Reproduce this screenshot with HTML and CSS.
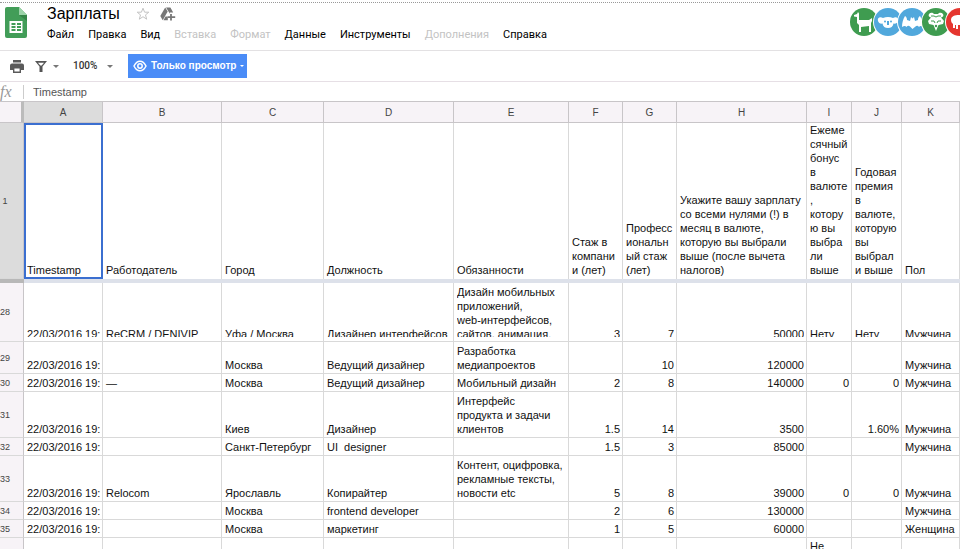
FILE: index.html
```
<!DOCTYPE html>
<html lang="ru">
<head>
  <meta charset="UTF-8">
  <title>Зарплаты</title>
  <meta name="viewport" content="width=device-width, initial-scale=1">
  <link rel="stylesheet" href="styles.css">
</head>
<body>

<header class="header">
  <a class="logo" href="#" aria-label="Зарплаты">
    <svg width="22" height="31" viewBox="0 0 22 31">
      <path d="M2 0h12l8 8v21a2 2 0 0 1-2 2H2a2 2 0 0 1-2-2V2a2 2 0 0 1 2-2z" fill="#429d58"/>
      <path d="M14 8h8v6z" fill="#348446"/>
      <path d="M14 0l8 8h-8z" fill="#9bd3a8"/>
      <path d="M4.500 14h13v12h-13z" fill="#fff"/>
      <path d="M6.500 16h4v2h-4zM12 16h4v2h-4zM6.500 19h4v2h-4zM12 19h4v2h-4zM6.500 22h4v2h-4zM12 22h4v2h-4z" fill="#429d58"/>
    </svg>
  </a>
  <div class="header-main">
    <div class="title-row">
      <h1>Зарплаты</h1>
      <button class="icon-button" aria-label="Пометить">
        <svg width="14" height="14" viewBox="0 0 14 14">
          <path d="M7 1.200l1.600 4h4.200L9.500 7.900l1.200 4.300L7 9.700l-3.700 2.500 1.200-4.300L1.200 5.200h4.200z" fill="none" stroke="#c4c4c4"/>
        </svg>
      </button>
      <button class="icon-button" aria-label="Добавить на диск">
        <svg width="16" height="14" viewBox="0 0 16 14">
          <path d="M5.200 0.500L0.300 9l2.400 4.200 5-8.600z" fill="#777"/>
          <path d="M6 0.500h4.400l2.800 5h-3.300v1.300z" fill="#777"/>
          <path d="M5.500 9.500h2.300v3.700H3.500z" fill="#777"/>
          <path d="M11 7v6.500M7.800 10.200h7.400" stroke="#777" stroke-width="1.800"/>
        </svg>
      </button>
    </div>
    <nav class="menu">
      <button>Файл</button>
      <button>Правка</button>
      <button>Вид</button>
      <button disabled>Вставка</button>
      <button disabled>Формат</button>
      <button>Данные</button>
      <button>Инструменты</button>
      <button disabled>Дополнения</button>
      <button>Справка</button>
    </nav>
  </div>
  <div class="avatars">
    <svg class="avatar green" viewBox="0 0 28 28">
      <path d="M4 7l3-1 1-2 1 1.500V12h10l3-2v3l-1 2v9h-2v-6l-8 1v5H9v-7L7 15V9L4 8.500z" fill="#fff"/>
    </svg>
    <svg class="avatar blue" viewBox="0 0 28 28">
      <path d="M4 13c-1-3 2-5 5-3 3-1.500 7-1.500 10 0 3-2 6 0 5 3-.5 2-2.500 3-4.500 2.500C19 18.500 17 20 14 20s-5-1.500-5.500-4.500C6.500 16 4.500 15 4 13z" fill="#fff"/>
      <circle cx="11" cy="13.500" r="1" fill="#51a8dc"/>
      <circle cx="17" cy="13.500" r="1" fill="#51a8dc"/>
      <path d="M13 13h2v4h-2z" fill="#51a8dc"/>
    </svg>
    <svg class="avatar blue" viewBox="0 0 28 28">
      <path d="M7 8c1.500 1 2 2 2 4l3 1 1-4 1.500 1.500L16 9l1 4 3-1c0-2 .5-3 2-4 2 3 3 7 3 11-2-1.500-3-1.500-4 0-1-1.500-2.500-1.500-3.500-.5L14.500 21 12 18.500c-1-1-2.500-1-3.500.5-1-1.500-2.500-1.500-4.500 0 0-4 1-8 3-11z" fill="#fff"/>
    </svg>
    <svg class="avatar green" viewBox="0 0 28 28">
      <path d="M7 6c2-2 4-1 5 0h4c1-1 3-2 5 0 1 2 0 3-2 3.500L22 13l-1 3-4.500 1-2.500 6-2.500-6L7 16l-1-3 3-3.500C7 9 6 8 7 6z" fill="#fff"/>
      <path d="M9 8h3l2 1 2-1h3M9 13l3 0 1 2M19 13l-3 0-1 2" fill="none" stroke="#3f9c50" stroke-width="1"/>
      <circle cx="14" cy="18" r="1.200" fill="#3f9c50"/>
    </svg>
    <svg class="avatar red" viewBox="0 0 28 28">
      <path d="M5 12c0-4 4-5 8-5 6 0 9 3 9 7v6h-3v-3h-7v4h-2v-4H9v3H7v-4c-1-1-2-2-2-4z" fill="#fff"/>
    </svg>
  </div>
</header>

<div class="toolbar">
  <button class="icon-button" aria-label="Печать">
    <svg width="14" height="13" viewBox="0 0 14 13">
      <path d="M3 0h8v2.500H3zM2 3.500h10a2 2 0 0 1 2 2V10h-3V8H3v2H0V5.500a2 2 0 0 1 2-2z" fill="#5a5a5a"/>
      <path d="M3.700 7.700h6.600v4.600H3.700z" fill="#fff" stroke="#5a5a5a" stroke-width="1.400"/>
    </svg>
  </button>
  <button class="icon-button filter" aria-label="Фильтр">
    <svg width="12" height="11" viewBox="0 0 12 11">
      <path d="M0 0h12L7.500 5.500V11h-3V5.500z" fill="#555"/>
      <path d="M3 1.700h6L6.700 4.500H5.300z" fill="#fff"/>
    </svg>
    <span class="caret"></span>
  </button>
  <label class="zoom">
    <select aria-label="Масштаб">
      <option>100%</option>
    </select>
    <span class="caret"></span>
  </label>
  <button class="view-only">
    <svg width="14" height="12" viewBox="0 0 14 12">
      <path d="M1 6c1.500-3 3.500-4.800 6-4.800S11.500 3 13 6c-1.500 3-3.500 4.800-6 4.800S2.500 9 1 6z" fill="none" stroke="#fff" stroke-width="1.500"/>
      <circle cx="7" cy="6" r="2.200" fill="none" stroke="#fff" stroke-width="1.500"/>
    </svg>
    Только просмотр
    <span class="caret light"></span>
  </button>
</div>

<div class="formula-bar">
  <label class="fx" for="formula">fx</label>
  <input id="formula" type="text" value="Timestamp">
</div>

<main class="grid">
  <table>
    <colgroup>
      <col class="col-num"><col class="col-a"><col class="col-b"><col class="col-c">
      <col class="col-d"><col class="col-e"><col class="col-f"><col class="col-g">
      <col class="col-h"><col class="col-i"><col class="col-j"><col class="col-k">
    </colgroup>
    <thead>
      <tr class="letters">
        <td class="corner"></td>
        <th class="active">A</th><th>B</th><th>C</th><th>D</th><th>E</th><th>F</th>
        <th>G</th><th>H</th><th>I</th><th>J</th><th>K</th>
      </tr>
      <tr class="row-titles">
        <th class="active">1</th>
        <td class="selected">Timestamp</td>
        <td>Работодатель</td>
        <td>Город</td>
        <td>Должность</td>
        <td>Обязанности</td>
        <td>Стаж в<br>компани<br>и (лет)</td>
        <td>Професс<br>иональн<br>ый стаж<br>(лет)</td>
        <td>Укажите вашу зарплату<br>со всеми нулями (!) в<br>месяц в валюте,<br>которую вы выбрали<br>выше (после вычета<br>налогов)</td>
        <td>Ежеме<br>сячный<br>бонус<br>в<br>валюте<br>,<br>котору<br>ю вы<br>выбра<br>ли<br>выше</td>
        <td>Годовая<br>премия<br>в<br>валюте,<br>которую<br>вы<br>выбрал<br>и выше</td>
        <td>Пол</td>
      </tr>
      <tr class="freeze">
        <td></td>
        <td colspan="11"></td>
      </tr>
    </thead>
    <tbody>
      <tr class="row-cut">
        <th>28</th>
        <td><div><span>22/03/2016 19:</span></div></td>
        <td><div><span>ReCRM / DENIVIP</span></div></td>
        <td><div><span>Уфа / Москва</span></div></td>
        <td><div><span>Дизайнер интерфейсов</span></div></td>
        <td><div><span>Дизайн мобильных<br>приложений,<br>web-интерфейсов,<br>сайтов, анимация.</span></div></td>
        <td class="num"><div><span>3</span></div></td>
        <td class="num"><div><span>7</span></div></td>
        <td class="num"><div><span>50000</span></div></td>
        <td><div><span>Нету</span></div></td>
        <td><div><span>Нету</span></div></td>
        <td><div><span>Мужчина</span></div></td>
      </tr>
      <tr class="lines-2">
        <th>29</th>
        <td>22/03/2016 19:</td>
        <td></td>
        <td>Москва</td>
        <td>Ведущий дизайнер</td>
        <td>Разработка<br>медиапроектов</td>
        <td></td>
        <td class="num">10</td>
        <td class="num">120000</td>
        <td></td>
        <td></td>
        <td>Мужчина</td>
      </tr>
      <tr>
        <th>30</th>
        <td>22/03/2016 19:</td>
        <td>—</td>
        <td>Москва</td>
        <td>Ведущий дизайнер</td>
        <td>Мобильный дизайн</td>
        <td class="num">2</td>
        <td class="num">8</td>
        <td class="num">140000</td>
        <td class="num">0</td>
        <td class="num">0</td>
        <td>Мужчина</td>
      </tr>
      <tr class="lines-3">
        <th>31</th>
        <td>22/03/2016 19:</td>
        <td></td>
        <td>Киев</td>
        <td>Дизайнер</td>
        <td>Интерфейс<br>продукта и задачи<br>клиентов</td>
        <td class="num">1.5</td>
        <td class="num">14</td>
        <td class="num">3500</td>
        <td></td>
        <td class="num">1.60%</td>
        <td>Мужчина</td>
      </tr>
      <tr>
        <th>32</th>
        <td>22/03/2016 19:</td>
        <td></td>
        <td>Санкт-Петербург</td>
        <td>UI&nbsp; designer</td>
        <td></td>
        <td class="num">1.5</td>
        <td class="num">3</td>
        <td class="num">85000</td>
        <td></td>
        <td></td>
        <td>Мужчина</td>
      </tr>
      <tr class="lines-3">
        <th>33</th>
        <td>22/03/2016 19:</td>
        <td>Relocom</td>
        <td>Ярославль</td>
        <td>Копирайтер</td>
        <td>Контент, оцифровка,<br>рекламные тексты,<br>новости etc</td>
        <td class="num">5</td>
        <td class="num">8</td>
        <td class="num">39000</td>
        <td class="num">0</td>
        <td class="num">0</td>
        <td>Мужчина</td>
      </tr>
      <tr>
        <th>34</th>
        <td>22/03/2016 19:</td>
        <td></td>
        <td>Москва</td>
        <td>frontend developer</td>
        <td></td>
        <td class="num">2</td>
        <td class="num">6</td>
        <td class="num">130000</td>
        <td></td>
        <td></td>
        <td>Мужчина</td>
      </tr>
      <tr>
        <th>35</th>
        <td>22/03/2016 19:</td>
        <td></td>
        <td>Москва</td>
        <td>маркетинг</td>
        <td></td>
        <td class="num">1</td>
        <td class="num">5</td>
        <td class="num">60000</td>
        <td></td>
        <td></td>
        <td>Женщина</td>
      </tr>
      <tr class="row-last">
        <th></th>
        <td></td><td></td><td></td><td></td><td></td><td></td><td></td><td></td>
        <td>Не</td>
        <td></td><td></td>
      </tr>
    </tbody>
  </table>
</main>

</body>
</html>
```
FILE: styles.css
```
* {
  box-sizing: border-box;
}
body {
  margin: 0;
  padding-top: 2px;
  height: 100vh;
  overflow: hidden;
  display: flex;
  flex-direction: column;
  background: #fff;
  color: #111;
  font-family: "Liberation Sans", Arial, sans-serif;
  font-size: 11px;
  line-height: 14px;
}
button, input, select {
  margin: 0;
  padding: 0;
  border: 0;
  background: none;
  color: inherit;
  font: inherit;
}
svg {
  display: block;
}
.header {
  display: flex;
  flex: none;
  height: 49px;
  overflow: hidden;
  border-top: 1px dotted #999;
  border-bottom: 1px solid #e3e1e3;
}
.logo {
  padding: 4px 20px 0 5px;
}
.header-main {
  flex: 1;
}
.title-row {
  display: flex;
  align-items: center;
  gap: 10px;
  height: 22px;
}
h1 {
  margin: 0 6px 0 0;
  font-size: 16px;
  line-height: 22px;
  font-weight: normal;
  color: #000;
}
.menu {
  display: flex;
  gap: 14px;
  font-family: Roboto, Arial, sans-serif;
  font-size: 11px;
  line-height: 20px;
  color: #000;
}
.menu button:disabled {
  color: #c3c3c3;
}
.avatars {
  display: flex;
  padding-top: 5px;
  margin-right: -14px;
}
.avatar {
  width: 28px;
  height: 28px;
  margin-left: -4px;
  border-radius: 50%;
  box-shadow: 0 0 0 1px #fff;
}
.green {
  background: #3f9c50;
}
.blue {
  background: #51a8dc;
}
.red {
  background: #e5362f;
}
.toolbar {
  display: flex;
  flex: none;
  align-items: center;
  height: 31px;
  padding-left: 10px;
  border-bottom: 1px solid #e6dfe5;
}
.filter {
  display: flex;
  align-items: center;
  gap: 6px;
  margin-left: 11px;
}
.caret {
  border: 3px solid transparent;
  border-top-color: #777;
  border-bottom: 0;
}
.caret.light {
  border-width: 2px 2px 0;
  border-top-color: #fff;
}
.zoom {
  display: flex;
  align-items: center;
  gap: 9px;
  margin: 0 15px 0 14px;
  color: #333;
}
.zoom select {
  appearance: none;
  width: 25px;
  font-family: Roboto, Arial, sans-serif;
  font-size: 10px;
  font-weight: 500;
}
.view-only {
  display: flex;
  align-items: center;
  gap: 4px;
  height: 24px;
  padding: 0 3px 0 5px;
  background: #4a8cf7;
  color: #fff;
  font-size: 10px;
  font-weight: bold;
}
.formula-bar {
  display: flex;
  flex: none;
  align-items: center;
  height: 19px;
}
.fx {
  width: 24px;
  border-right: 1px solid #ccc;
  color: #999;
  font-family: "Liberation Serif", serif;
  font-size: 16px;
  font-style: italic;
}
.formula-bar input {
  flex: 1;
  padding-left: 9px;
  color: #555;
  font-size: 11px;
}
.grid {
  flex: 1;
  overflow: hidden;
}
table {
  width: 100%;
  table-layout: fixed;
  border-spacing: 0;
}
.col-num { width: 24px; }
.col-a { width: 79px; }
.col-b { width: 119px; }
.col-c { width: 102px; }
.col-d { width: 130px; }
.col-e { width: 115px; }
.col-f { width: 54px; }
.col-g { width: 54px; }
.col-h { width: 130px; }
.col-i { width: 45px; }
.col-j { width: 50px; }
td {
  height: 18px;
  padding: 1px 2px 1px 3px;
  border-right: 1px solid #d9d9d9;
  border-bottom: 1px solid #d9d9d9;
  vertical-align: bottom;
  white-space: nowrap;
  overflow: hidden;
}
th {
  padding: 0 13px 0 0;
  border-right: 1px solid #c8c5c8;
  border-bottom: 1px solid #d9d9d9;
  background: #f7f3f7;
  color: #444;
  font-size: 9px;
  font-weight: normal;
  line-height: 12px;
}
.num {
  text-align: right;
}
.letters th, .letters td {
  height: 22px;
  padding: 2px 0 0;
  border-top: 1px solid #c8c5c8;
  border-bottom: 1px solid #c8c5c8;
  font-size: 10px;
}
.letters .corner {
  border-right: 3px solid #bbb;
  background: #f7f3f7;
}
.letters .active, .row-titles .active {
  background: #dcdcdc;
}
.row-titles td {
  height: 156px;
  padding-top: 0;
  padding-bottom: 2px;
  border-bottom: 0;
}
.row-titles .selected {
  outline: 2px solid #3b6fd0;
  outline-offset: -2px;
}
.freeze td {
  height: 4px;
  padding: 0;
  border: 0;
  background: #dde1ea;
}
.freeze td:first-child {
  background: #b8b8b8;
}
/* the text of this row is cut above the cell's lower edge */
.row-cut td {
  height: 59px;
  padding-top: 0;
  padding-bottom: 4px;
}
.row-cut div {
  display: flex;
  align-items: flex-end;
  height: 54px;
  overflow: hidden;
}
.row-cut .num div {
  justify-content: flex-end;
}
.row-cut span {
  margin-bottom: -4px;
}
.lines-2 td {
  height: 32px;
}
.lines-3 td {
  height: 46px;
}
.row-last td {
  height: 60px;
  vertical-align: top;
}
```
